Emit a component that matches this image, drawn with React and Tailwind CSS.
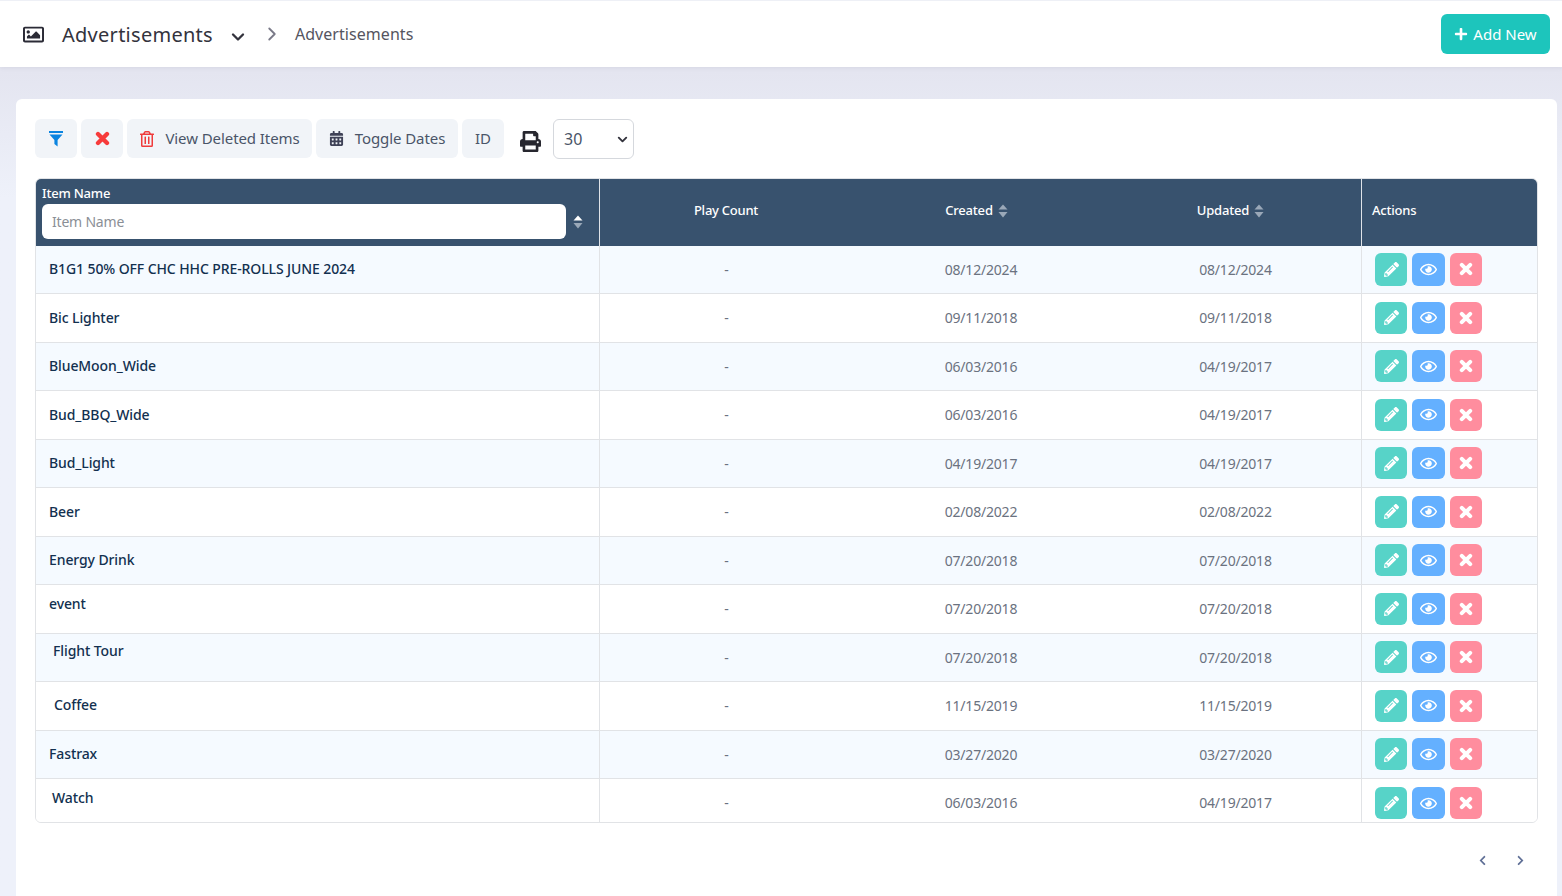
import React from "react";
import { FaRegImage, FaRegTrashAlt, FaCalendarAlt, FaPrint, FaPlus, FaPencilAlt, FaRegEye, FaChevronLeft, FaChevronRight } from "react-icons/fa";
import { ChevronDown, ChevronRight } from "lucide-react";

const rows = [
  { name: "B1G1 50% OFF CHC HHC PRE-ROLLS JUNE 2024", created: "08/12/2024", updated: "08/12/2024", cls: "pl-[13px] pb-[1px]" },
  { name: "Bic Lighter", created: "09/11/2018", updated: "09/11/2018", cls: "pl-[13px] pb-[1px]" },
  { name: "BlueMoon_Wide", created: "06/03/2016", updated: "04/19/2017", cls: "pl-[13px] pb-[1px]" },
  { name: "Bud_BBQ_Wide", created: "06/03/2016", updated: "04/19/2017", cls: "pl-[13px] pb-[1px]" },
  { name: "Bud_Light", created: "04/19/2017", updated: "04/19/2017", cls: "pl-[13px] pb-[1px]" },
  { name: "Beer", created: "02/08/2022", updated: "02/08/2022", cls: "pl-[13px] pb-[1px]" },
  { name: "Energy Drink", created: "07/20/2018", updated: "07/20/2018", cls: "pl-[13px] pb-[1px]" },
  { name: "event", created: "07/20/2018", updated: "07/20/2018", cls: "pl-[13px] pb-[10px]" },
  { name: "Flight Tour", created: "07/20/2018", updated: "07/20/2018", cls: "pl-[17px] pb-[13px]" },
  { name: "Coffee", created: "11/15/2019", updated: "11/15/2019", cls: "pl-[18px] pb-[2px]" },
  { name: "Fastrax", created: "03/27/2020", updated: "03/27/2020", cls: "pl-[13px] pb-[1px]" },
  { name: "Watch", created: "06/03/2016", updated: "04/19/2017", cls: "pl-[16px] pb-[7px]" },
];

const SortIcon = ({ top = "#9aa8b8" }) => (
  <svg width="10" height="14" viewBox="0 0 10 14" className="shrink-0">
    <path d="M5 0.5 L9.5 5.5 H0.5 Z" fill={top} />
    <path d="M5 13.5 L9.5 8 H0.5 Z" fill="#9aa8b8" />
  </svg>
);

const FilterIcon = () => (
  <svg width="14" height="16" viewBox="0 0 14 16">
    <rect x="0" y="0" width="14" height="2" fill="#0a84e0" />
    <path d="M0.5 3.5 H13.5 L8.6 9 V15.5 L5.4 13 V9 Z" fill="#0a84e0" />
  </svg>
);

const CrossIcon = ({ size, color }) => (
  <svg width={size} height={size} viewBox="0 0 16 16">
    <path d="M3.2 3.2 L12.8 12.8 M12.8 3.2 L3.2 12.8" stroke={color} strokeWidth="4.6" strokeLinecap="round" fill="none" />
  </svg>
);

const ToolButton = ({ children, className }) => (
  <button className={`h-[39px] bg-[#f1f4f8] rounded-md flex items-center justify-center text-[#4a5568] text-[15px] tracking-[-0.08px] ${className}`}>
    {children}
  </button>
);

const ActionButtons = ({ h }) => (
  <div className="flex gap-[5px]">
    <button className={`w-[32px] ${h} rounded-md bg-[#57d3c8] flex items-center justify-center text-white`}>
      <FaPencilAlt size={15} />
    </button>
    <button className={`w-[33px] ${h} rounded-md bg-[#64b0ff] flex items-center justify-center text-white`}>
      <FaRegEye size={17} />
    </button>
    <button className={`w-[32px] ${h} rounded-md bg-[#ff8d9e] flex items-center justify-center text-white`}>
      <CrossIcon size={14} color="#ffffff" />
    </button>
  </div>
);

export default function App() {
  return (
    <div className="h-[896px] overflow-hidden bg-linear-to-b from-[#e4e5f0] from-[8%] to-[#eef1fa] to-[22%] font-['Noto_Sans','Open_Sans',sans-serif]">
      <div className="h-[67px] bg-white border-t border-[#eef0f6] shadow-[0_1px_4px_rgba(90,90,130,0.1)] flex items-center pl-[23px] pr-[12px]">
        <FaRegImage size={21} className="text-[#2b2b36]" />
        <h1 className="ml-[18px] mt-[2px] text-[20px] text-[#33333d] tracking-[0.27px]">Advertisements</h1>
        <ChevronDown size={20} strokeWidth={2.8} className="ml-[15px] mt-[5px] text-[#33333d]" />
        <ChevronRight size={22} strokeWidth={2} className="ml-[13px] text-[#7a7a88]" />
        <span className="ml-[12px] text-[16px] text-[#55555f] tracking-[0.05px]">Advertisements</span>
        <button className="ml-auto h-[40px] w-[109px] rounded-md bg-[#1dc5bc] text-white text-[15px] flex items-center justify-center gap-[5px]">
          <FaPlus size={14} />
          Add New
        </button>
      </div>

      <div className="mt-[32px] ml-[16px] mr-[5px] bg-white rounded-t-md pt-[20px] pl-[19px] h-[820px]">
        <div className="flex items-start gap-[4px]">
          <ToolButton className="w-[42px]"><FilterIcon /></ToolButton>
          <ToolButton className="w-[42px]"><CrossIcon size={15} color="#f73b3b" /></ToolButton>
          <ToolButton className="w-[185px] gap-[10px]">
            <FaRegTrashAlt size={16} className="text-[#ef3b3b]" />
            View Deleted Items
          </ToolButton>
          <ToolButton className="w-[142px] gap-[11px]">
            <FaCalendarAlt size={15} className="text-[#3f4257]" />
            Toggle Dates
          </ToolButton>
          <ToolButton className="w-[42px]">ID</ToolButton>
          <FaPrint size={21} className="ml-[12px] mt-[12px] text-[#27272f]" />
          <div className="relative ml-[8px]">
            <select className="appearance-none w-[81px] h-[40px] px-[10px] bg-white border border-[#d5d8dd] rounded-md text-[16px] text-[#4a5568]" defaultValue="30">
              <option>30</option>
            </select>
            <ChevronDown size={15} strokeWidth={3} className="absolute right-[4px] top-[13px] text-[#33333d] pointer-events-none" />
          </div>
        </div>

        <div className="mt-[19px] w-[1503px] border border-[#e1e3e6] rounded-md overflow-hidden">
          <div className="flex h-[66.5px] bg-[#38526e] text-white text-[13px] font-medium tracking-[-0.2px]">
            <div className="w-[564px] border-r border-[#dfe3e8] px-[6px] pt-[5px]">
              <div className="leading-[18px]">Item Name</div>
              <div className="flex items-center mt-[2px]">
                <input placeholder="Item Name" className="w-[524px] h-[35px] bg-white rounded-md px-[10px] text-[14px] font-normal tracking-[-0.2px] text-[#333] placeholder:text-[#8b8f96] outline-none" />
                <span className="ml-[7px]"><SortIcon top="#ffffff" /></span>
              </div>
            </div>
            <div className="w-[254px] pb-[3px] pr-[2px] tracking-[-0.25px] flex items-center justify-center">Play Count</div>
            <div className="w-[254px] pb-[3px] pr-[9px] flex items-center justify-center gap-[5px]">Created <SortIcon /></div>
            <div className="w-[254px] pb-[3px] pr-[8px] flex items-center justify-center gap-[5px] border-r border-[#dfe3e8]">Updated <SortIcon /></div>
            <div className="flex-1 pb-[3px] flex items-center pl-[10px]">Actions</div>
          </div>

          {rows.map((r, i) => {
            const last = i === rows.length - 1;
            const cellPad = last ? "pt-[4px]" : "";
            return (
              <div
                key={i}
                className={`flex ${i % 2 === 0 ? "bg-[#f5faff]" : "bg-white"} ${last ? "h-[43px]" : "h-[48.5px] border-b border-[#e1e3e6]"}`}
              >
                <div className={`w-[563px] flex items-center text-[14px] font-medium tracking-[-0.1px] text-[#12304f] ${r.cls}`}>{r.name}</div>
                <div className={`w-[255px] pr-[1px] border-l border-[#e1e3e6] flex items-center justify-center text-[14px] text-[#6b7280] ${cellPad}`}>-</div>
                <div className={`w-[254px] flex items-center justify-center text-[14px] tracking-[-0.2px] text-[#6b7280] ${cellPad}`}>{r.created}</div>
                <div className={`w-[253px] pl-[2px] flex items-center justify-center text-[14px] tracking-[-0.2px] text-[#6b7280] ${cellPad}`}>{r.updated}</div>
                <div className={`flex-1 border-l border-[#e1e3e6] flex items-center pl-[13px] ${last ? "pt-[5px]" : ""}`}>
                  <ActionButtons h={i === 0 ? "h-[33px]" : "h-[32px]"} />
                </div>
              </div>
            );
          })}
        </div>

        <div className="flex justify-end gap-[27px] mt-[32px] pr-[31px] text-[#5f6f96]">
          <FaChevronLeft size={11} />
          <FaChevronRight size={11} />
        </div>
      </div>
    </div>
  );
}
